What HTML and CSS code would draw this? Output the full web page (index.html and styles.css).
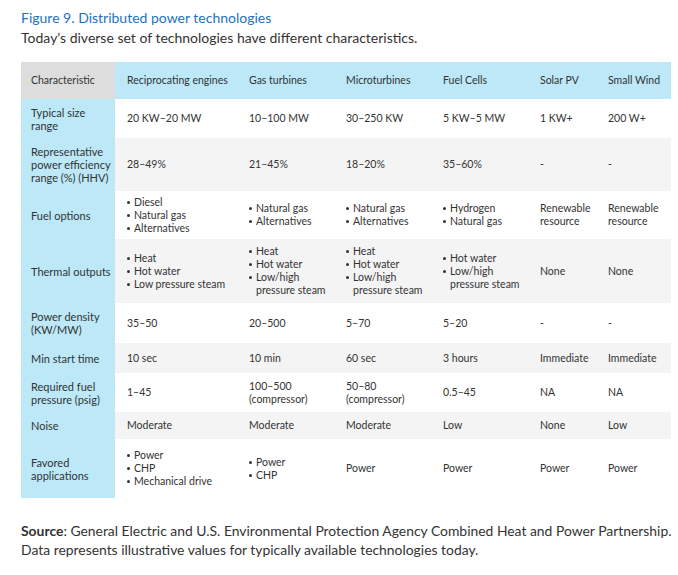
FILE: index.html
```html
<!DOCTYPE html>
<html>
<head>
<meta charset="utf-8">
<link rel="stylesheet" href="styles.css">
</head>
<body>
<div class="page">
  <h1 class="title">Figure 9. Distributed power technologies</h1>
  <p class="subtitle">Today’s diverse set of technologies have different characteristics.</p>
  <table class="grid">
    <colgroup>
      <col class="c1"><col class="c2"><col class="c3"><col class="c4"><col class="c5"><col class="c6"><col class="c7">
    </colgroup>
    <thead>
      <tr class="rh">
        <th class="corner">Characteristic</th>
        <th>Reciprocating engines</th>
        <th>Gas turbines</th>
        <th>Microturbines</th>
        <th>Fuel Cells</th>
        <th>Solar PV</th>
        <th>Small Wind</th>
      </tr>
    </thead>
    <tbody>
      <tr class="r1">
        <th>Typical size range</th>
        <td>20 KW–20 MW</td><td>10–100 MW</td><td>30–250 KW</td><td>5 KW–5 MW</td><td>1 KW+</td><td>200 W+</td>
      </tr>
      <tr class="r2 alt">
        <th>Representative power efficiency range (%) (HHV)</th>
        <td>28–49%</td><td>21–45%</td><td>18–20%</td><td>35–60%</td><td>-</td><td>-</td>
      </tr>
      <tr class="r3">
        <th>Fuel options</th>
        <td><ul><li>Diesel</li><li>Natural gas</li><li>Alternatives</li></ul></td>
        <td><ul><li>Natural gas</li><li>Alternatives</li></ul></td>
        <td><ul><li>Natural gas</li><li>Alternatives</li></ul></td>
        <td><ul><li>Hydrogen</li><li>Natural gas</li></ul></td>
        <td>Renewable resource</td>
        <td>Renewable resource</td>
      </tr>
      <tr class="r4 alt">
        <th>Thermal outputs</th>
        <td><ul><li>Heat</li><li>Hot water</li><li>Low pressure steam</li></ul></td>
        <td><ul><li>Heat</li><li>Hot water</li><li>Low/high pressure steam</li></ul></td>
        <td><ul><li>Heat</li><li>Hot water</li><li>Low/high pressure steam</li></ul></td>
        <td><ul><li>Hot water</li><li>Low/high pressure steam</li></ul></td>
        <td>None</td>
        <td>None</td>
      </tr>
      <tr class="r5">
        <th>Power density (KW/MW)</th>
        <td>35–50</td><td>20–500</td><td>5–70</td><td>5–20</td><td>-</td><td>-</td>
      </tr>
      <tr class="r6 alt">
        <th>Min start time</th>
        <td>10 sec</td><td>10 min</td><td>60 sec</td><td>3 hours</td><td>Immediate</td><td>Immediate</td>
      </tr>
      <tr class="r7">
        <th>Required fuel pressure (psig)</th>
        <td>1–45</td><td>100–500 (compressor)</td><td>50–80 (compressor)</td><td>0.5–45</td><td>NA</td><td>NA</td>
      </tr>
      <tr class="r8 alt">
        <th>Noise</th>
        <td>Moderate</td><td>Moderate</td><td>Moderate</td><td>Low</td><td>None</td><td>Low</td>
      </tr>
      <tr class="r9">
        <th>Favored applications</th>
        <td><ul><li>Power</li><li>CHP</li><li>Mechanical drive</li></ul></td>
        <td><ul><li>Power</li><li>CHP</li></ul></td>
        <td>Power</td><td>Power</td><td>Power</td><td>Power</td>
      </tr>
    </tbody>
  </table>
  <p class="source"><b>Source</b>: General Electric and U.S. Environmental Protection Agency Combined Heat and Power Partnership.<br>Data represents illustrative values for typically available technologies today.</p>
</div>
</body>
</html>
```
FILE: styles.css
```css
html, body {
  margin: 0;
  padding: 0;
  background: #ffffff;
}
body {
  font-family: Lato, "Liberation Sans", sans-serif;
  color: #333333;
}
.page {
  padding: 8px 0 0 21px;
  width: 650px;
}
.title {
  margin: 0;
  font-size: 14px;
  font-weight: normal;
  line-height: 19px;
  color: #1e72c2;
}
.subtitle {
  margin: 1px 0 0 0;
  font-size: 14px;
  line-height: 19px;
  color: #333333;
}
.grid {
  margin-top: 15px;
  border-collapse: collapse;
  table-layout: fixed;
  width: 650px;
  font-size: 10.5px;
  line-height: 13px;
}
.c1 { width: 94px; }
.c2 { width: 122px; }
.c3 { width: 97px; }
.c4 { width: 97px; }
.c5 { width: 97px; }
.c6 { width: 68px; }
.c7 { width: 75px; }
.grid th, .grid td {
  padding: 0 2px 0 12px;
  text-align: left;
  vertical-align: middle;
  font-weight: normal;
}
.grid tbody th {
  padding: 0 4px 0 10px;
  font-size: 11px;
  background: #bce8f8;
}
.grid thead th {
  background: #bce8f8;
}
.grid thead th.corner {
  background: #dddddd;
  padding-left: 10px;
}
.alt td {
  background: #f4f4f4;
}
.grid ul {
  margin: 0;
  padding: 0 0 0 7px;
  list-style: none;
}
.grid li {
  position: relative;
}
.grid li::before {
  content: "";
  position: absolute;
  left: -7px;
  top: 5px;
  width: 3px;
  height: 3px;
  border-radius: 50%;
  background: #333333;
}
.rh { height: 37px; }
.r1 { height: 39px; }
.r2 { height: 53px; }
.r3 { height: 48px; }
.r4 { height: 64px; }
.r5 { height: 40px; }
.r6 { height: 30px; }
.r7 { height: 39px; }
.r8 { height: 27px; }
.r9 { height: 59px; }
.source {
  margin: 23px 0 0 0;
  font-size: 13.9px;
  line-height: 19px;
  white-space: nowrap;
  color: #333333;
}
.source b {
  font-weight: bold;
}
```
